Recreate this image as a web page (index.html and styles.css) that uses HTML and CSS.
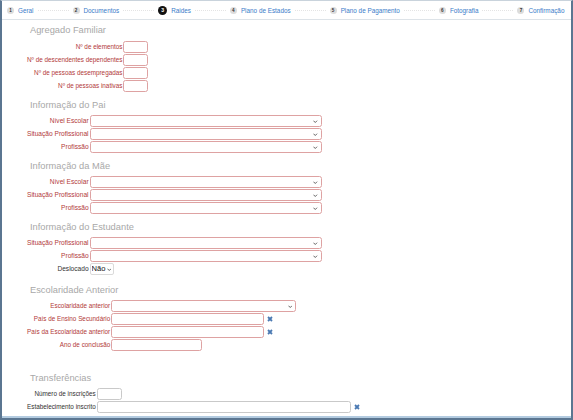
FILE: index.html
```html
<!DOCTYPE html>
<html lang="pt">
<head>
<meta charset="utf-8">
<title>Raides</title>
<link rel="stylesheet" href="styles.css">
</head>
<body>
<div class="frame">
  <nav class="steps">
    <div class="step"><span class="num">1</span><span class="lbl">Geral</span></div>
    <span class="sep"></span>
    <div class="step"><span class="num">2</span><span class="lbl">Documentos</span></div>
    <span class="sep"></span>
    <div class="step active"><span class="num">3</span><span class="lbl">Raides</span></div>
    <span class="sep"></span>
    <div class="step"><span class="num">4</span><span class="lbl">Plano de Estados</span></div>
    <span class="sep"></span>
    <div class="step"><span class="num">5</span><span class="lbl">Plano de Pagamento</span></div>
    <span class="sep"></span>
    <div class="step"><span class="num">6</span><span class="lbl">Fotografia</span></div>
    <span class="sep"></span>
    <div class="step"><span class="num">7</span><span class="lbl">Confirmação</span></div>
  </nav>

  <main class="content">
    <section class="sec sec-first">
      <h2>Agregado Familiar</h2>
      <div class="form">
        <label>Nº de elementos</label><div class="ctl"><input class="in w-num"></div>
        <label>Nº de descendentes dependentes</label><div class="ctl"><input class="in w-num"></div>
        <label>Nº de pessoas desempregadas</label><div class="ctl"><input class="in w-num"></div>
        <label>Nº de pessoas inativas</label><div class="ctl"><input class="in w-num"></div>
      </div>
    </section>

    <section class="sec">
      <h2>Informação do Pai</h2>
      <div class="form form-wide">
        <label>Nível Escolar</label><div class="ctl"><div class="sel w-wide"><select></select><svg class="chev" viewBox="0 0 6 4"><path d="M0.6 0.6 L3 3 L5.4 0.6" /></svg></div></div>
        <label>Situação Profissional</label><div class="ctl"><div class="sel w-wide"><select></select><svg class="chev" viewBox="0 0 6 4"><path d="M0.6 0.6 L3 3 L5.4 0.6" /></svg></div></div>
        <label>Profissão</label><div class="ctl"><div class="sel w-wide"><select></select><svg class="chev" viewBox="0 0 6 4"><path d="M0.6 0.6 L3 3 L5.4 0.6" /></svg></div></div>
      </div>
    </section>

    <section class="sec">
      <h2>Informação da Mãe</h2>
      <div class="form form-wide">
        <label>Nível Escolar</label><div class="ctl"><div class="sel w-wide"><select></select><svg class="chev" viewBox="0 0 6 4"><path d="M0.6 0.6 L3 3 L5.4 0.6" /></svg></div></div>
        <label>Situação Profissional</label><div class="ctl"><div class="sel w-wide"><select></select><svg class="chev" viewBox="0 0 6 4"><path d="M0.6 0.6 L3 3 L5.4 0.6" /></svg></div></div>
        <label>Profissão</label><div class="ctl"><div class="sel w-wide"><select></select><svg class="chev" viewBox="0 0 6 4"><path d="M0.6 0.6 L3 3 L5.4 0.6" /></svg></div></div>
      </div>
    </section>

    <section class="sec">
      <h2>Informação do Estudante</h2>
      <div class="form form-wide">
        <label>Situação Profissional</label><div class="ctl"><div class="sel w-wide"><select></select><svg class="chev" viewBox="0 0 6 4"><path d="M0.6 0.6 L3 3 L5.4 0.6" /></svg></div></div>
        <label>Profissão</label><div class="ctl"><div class="sel w-wide"><select></select><svg class="chev" viewBox="0 0 6 4"><path d="M0.6 0.6 L3 3 L5.4 0.6" /></svg></div></div>
        <label class="plain">Deslocado</label><div class="ctl"><div class="sel sel-plain"><select><option>Não</option></select><svg class="chev" viewBox="0 0 6 4"><path d="M0.6 0.6 L3 3 L5.4 0.6" /></svg></div></div>
      </div>
    </section>

    <section class="sec sec-escol">
      <h2>Escolaridade Anterior</h2>
      <div class="form">
        <label>Escolaridade anterior</label><div class="ctl"><div class="sel w-mid"><select></select><svg class="chev" viewBox="0 0 6 4"><path d="M0.6 0.6 L3 3 L5.4 0.6" /></svg></div></div>
        <label>País de Ensino Secundário</label><div class="ctl"><input class="in w-country"><svg class="clear" viewBox="0 0 6 6"><path d="M1 1 L5 5 M5 1 L1 5" /></svg></div>
        <label>País da Escolaridade anterior</label><div class="ctl"><input class="in w-country"><svg class="clear" viewBox="0 0 6 6"><path d="M1 1 L5 5 M5 1 L1 5" /></svg></div>
        <label>Ano de conclusão</label><div class="ctl"><input class="in w-year"></div>
      </div>
    </section>

    <section class="sec sec-trans">
      <h2>Transferências</h2>
      <div class="form">
        <label class="plain">Número de inscrições</label><div class="ctl"><input class="in in-plain w-num"></div>
        <label class="plain">Estabelecimento inscrito</label><div class="ctl"><input class="in in-plain w-estab"><svg class="clear" viewBox="0 0 6 6"><path d="M1 1 L5 5 M5 1 L1 5" /></svg></div>
      </div>
    </section>
  </main>
</div>
</body>
</html>
```

FILE: styles.css
```css
* { box-sizing: border-box; }

html, body {
  margin: 0;
  padding: 0;
  background: #ffffff;
}

body {
  width: 573px;
  height: 420px;
  font-family: "Liberation Sans", Arial, sans-serif;
  overflow: hidden;
}

.frame {
  width: 573px;
  height: 420px;
  border-top: 1px solid #c9d3dc;
  border-left: 2px solid #5b7691;
  border-right: 2px solid #5b7691;
  border-bottom: 2px solid #5b7691;
  box-shadow: inset 0 -2px 0 #b3cbe0;
  display: flex;
  flex-direction: column;
}

/* ---------- steps bar ---------- */
.steps {
  height: 19px;
  border-bottom: 1px solid #dde3e8;
  display: flex;
  align-items: center;
  padding-left: 5px;
  flex-shrink: 0;
}

.step {
  display: flex;
  align-items: center;
  gap: 4px;
}

.num {
  width: 7px;
  height: 7px;
  border-radius: 50%;
  background: #dcdcdc;
  color: #333;
  font-size: 4.6px;
  font-weight: bold;
  line-height: 7px;
  text-align: center;
}

.step.active .num {
  width: 9px;
  height: 9px;
  line-height: 9px;
  background: #111;
  color: #fff;
  font-size: 5.2px;
}

.lbl {
  font-size: 6.35px;
  color: #3a7cc9;
  white-space: nowrap;
}

.sep {
  width: 31px;
  margin: 0 4px;
  border-top: 1px dotted #e4e4e4;
}

/* ---------- content ---------- */
.content {
  padding: 5px 0 0 25px;
}

.sec {
  margin-top: 8px;
}

.sec-first { margin-top: 0; }
.sec-escol { margin-top: 10px; }
.sec-trans { margin-top: 22px; }

.sec h2 {
  margin: 0 0 4px 3px;
  font-size: 9.3px;
  line-height: 11px;
  font-weight: normal;
  color: #a8a8a8;
}

.sec-first h2 { margin-bottom: 5px; }

.form {
  display: grid;
  grid-template-columns: max-content max-content;
  row-gap: 1px;
  align-items: center;
}

.form label {
  font-size: 6.35px;
  line-height: 12px;
  color: #b23a3a;
  text-align: right;
  padding-right: 1px;
  white-space: nowrap;
}

.form-wide label {
  font-size: 6.6px;
}

.form label.plain {
  color: #333;
}

.ctl {
  display: flex;
  align-items: center;
  height: 12px;
}

.in {
  display: block;
  height: 12px;
  border: 1px solid #dea2a2;
  border-radius: 2.5px;
  background: #fff;
  padding: 0;
  margin: 0;
  outline: none;
}

.in-plain {
  border-color: #c9c9c9;
}

.w-num { width: 25px; }
.w-country { width: 153px; }
.w-year { width: 91px; }
.w-estab { width: 254px; }

.sel {
  position: relative;
  display: block;
  height: 12px;
  font-size: 0;
  line-height: 0;
}

.sel select {
  display: block;
  -webkit-appearance: none;
  appearance: none;
  width: 100%;
  height: 12px;
  margin: 0;
  padding: 0 0 0 2px;
  border: 1px solid #dea2a2;
  border-radius: 2.5px;
  background: #fff;
  font-family: "Liberation Sans", Arial, sans-serif;
  font-size: 7.5px;
  line-height: 10px;
  color: #111;
  outline: none;
}

.w-wide { width: 232px; }
.w-mid { width: 185px; }

.sel-plain { width: 24px; }

.sel-plain select {
  border: 1px solid #dadada;
  border-radius: 2px;
  padding-left: 1px;
  font-size: 7.6px;
}

.chev {
  position: absolute;
  right: 4px;
  top: 4.5px;
  width: 4.5px;
  height: 3.5px;
  fill: none;
  stroke: #444;
  stroke-width: 1.1;
}

.sel-plain .chev {
  right: 2.5px;
}

.clear {
  width: 6px;
  height: 6px;
  margin-left: 3px;
  fill: none;
  stroke: #4a79b2;
  stroke-width: 1.8;
}
```
